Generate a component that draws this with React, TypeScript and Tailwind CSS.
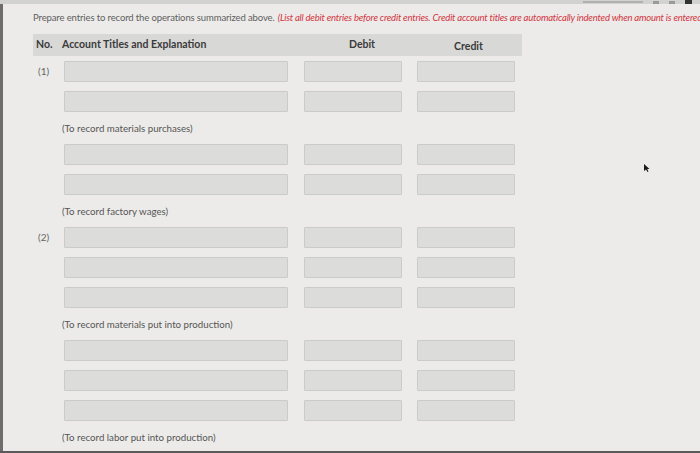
import React from "react";

type Entry = { no?: string; rows: number; expl: string };

const entries: Entry[] = [
  { no: "(1)", rows: 2, expl: "(To record materials purchases)" },
  { rows: 2, expl: "(To record factory wages)" },
  { no: "(2)", rows: 3, expl: "(To record materials put into production)" },
  { rows: 3, expl: "(To record labor put into production)" },
];

function InputRow({ no, first }: { no?: string; first: boolean }) {
  return (
    <div className={`flex items-center h-[21px] ${first ? "" : "mt-[9px]"}`}>
      <div className="w-[30px] text-[10px] text-[#666] pl-[5px]">{no ?? ""}</div>
      <div className="ml-[1px] w-[224px] h-[21px] bg-[#dcdcda] border border-[#cbcbc9] rounded-[1px]" />
      <div className="ml-[16px] w-[98px] h-[21px] bg-[#dcdcda] border border-[#cbcbc9] rounded-[1px]" />
      <div className="ml-[15px] w-[98px] h-[21px] bg-[#dcdcda] border border-[#cbcbc9] rounded-[1px]" />
    </div>
  );
}

export default function App() {
  return (
    <div
      className="relative w-[700px] h-[453px] overflow-hidden bg-[#ecebe9] flex flex-col"
      style={{ fontFamily: "Lato, 'Open Sans', sans-serif" }}
    >
      {/* top chrome strip */}
      <div className="h-[4px] bg-[#d2d2d0] flex justify-end items-center pr-[8px] gap-[10px] shrink-0">
        <div className="w-[60px] h-[2px] bg-[#b0b0b0]" />
        <div className="w-[6px] h-[3px] bg-[#9a9a9a]" />
        <div className="w-[6px] h-[3px] bg-[#9a9a9a]" />
        <div className="w-[7px] h-[4px] bg-[#333]" />
      </div>

      <div className="flex flex-1 min-h-0">
        <div className="w-[3px] bg-[#6d6d6d] shrink-0" />
        <div className="flex-1 min-w-0 pl-[30px] overflow-hidden">
          <div className="h-[26px] flex items-center whitespace-nowrap text-[9.5px] pt-[2px] overflow-hidden">
            <span className="text-[#5e5e5e] tracking-[-0.12px]">Prepare entries to record the operations summarized above.</span>
            <span className="ml-[3px] italic text-[#d2343f] tracking-[-0.2px]">
              (List all debit entries before credit entries. Credit account titles are automatically indented when amount is entered
            </span>
          </div>

          {/* header */}
          <div className="mt-[4px] w-[489px] h-[22px] bg-[#d8d8d6] flex items-center text-[10.5px] font-bold text-[#3a3a3a]">
            <div className="w-[29px] pl-[3px]">No.</div>
            <div className="w-[239px]">Account Titles and Explanation</div>
            <div className="w-[114px] text-center pl-[8px]">Debit</div>
            <div className="w-[107px] text-center pt-[3px]">Credit</div>
          </div>

          <div className="mt-[5px] flex flex-col">
            {entries.map((e, i) => (
              <div key={i} className="flex flex-col">
                {Array.from({ length: e.rows }).map((_, r) => (
                  <InputRow key={r} no={r === 0 ? e.no : undefined} first={r === 0} />
                ))}
                <div className="h-[32px] flex items-center pl-[29px] text-[9.7px] text-[#555]">
                  {e.expl}
                </div>
              </div>
            ))}
          </div>
        </div>
      </div>

      <div className="h-[2px] bg-[#5a5a5a] shrink-0" />

      {/* mouse cursor */}
      <svg className="absolute left-[643px] top-[163px]" width="8" height="10" viewBox="0 0 8 10">
        <path d="M1 1 L1 8 L3 6.5 L4.5 9 L5.5 8.5 L4.2 6 L6.5 6 Z" fill="#1a1a1a" />
      </svg>
    </div>
  );
}
